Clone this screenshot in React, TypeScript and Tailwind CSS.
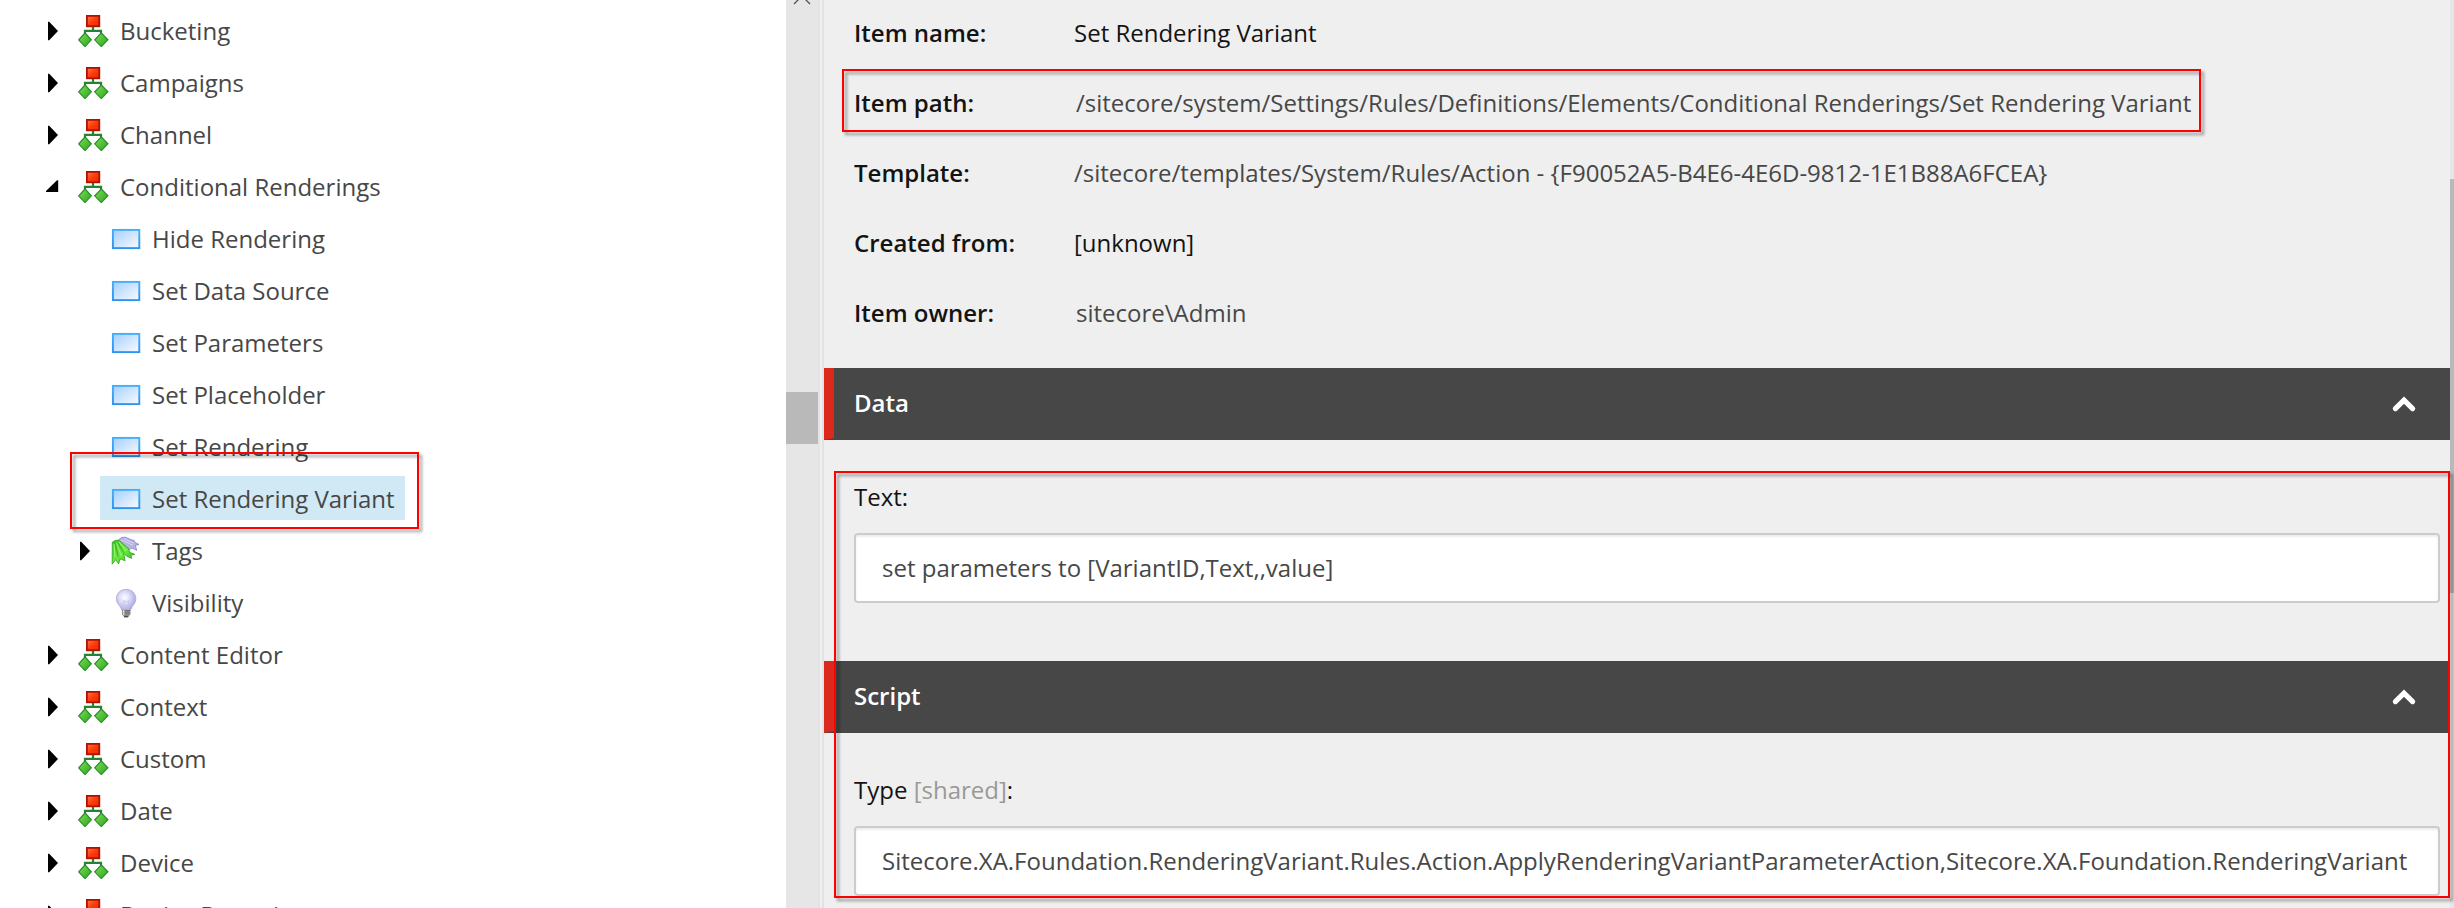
import React from "react";

type IconKind = "tree" | "panel" | "tags" | "bulb";
type Node = {
  label: string;
  icon: IconKind;
  nested?: boolean;
  state?: "closed" | "open";
  selected?: boolean;
};

const nodes: Node[] = [
  { label: "Bucketing", icon: "tree", state: "closed" },
  { label: "Campaigns", icon: "tree", state: "closed" },
  { label: "Channel", icon: "tree", state: "closed" },
  { label: "Conditional Renderings", icon: "tree", state: "open" },
  { label: "Hide Rendering", icon: "panel", nested: true },
  { label: "Set Data Source", icon: "panel", nested: true },
  { label: "Set Parameters", icon: "panel", nested: true },
  { label: "Set Placeholder", icon: "panel", nested: true },
  { label: "Set Rendering", icon: "panel", nested: true },
  { label: "Set Rendering Variant", icon: "panel", nested: true, selected: true },
  { label: "Tags", icon: "tags", nested: true, state: "closed" },
  { label: "Visibility", icon: "bulb", nested: true },
  { label: "Content Editor", icon: "tree", state: "closed" },
  { label: "Context", icon: "tree", state: "closed" },
  { label: "Custom", icon: "tree", state: "closed" },
  { label: "Date", icon: "tree", state: "closed" },
  { label: "Device", icon: "tree", state: "closed" },
  { label: "Device Detection", icon: "tree", state: "closed" },
];

function Gradients() {
  return (
    <svg width="0" height="0" className="absolute">
      <defs>
        <linearGradient id="red" x1="0" y1="0" x2="1" y2="1">
          <stop offset="0" stopColor="#ff7a4a" />
          <stop offset="0.5" stopColor="#fb3c08" />
          <stop offset="1" stopColor="#e82a00" />
        </linearGradient>
        <linearGradient id="green" x1="0" y1="0" x2="1" y2="1">
          <stop offset="0" stopColor="#7fe05a" />
          <stop offset="1" stopColor="#2ba31c" />
        </linearGradient>
        <linearGradient id="blue" x1="0" y1="0" x2="1" y2="1">
          <stop offset="0" stopColor="#a3cfff" />
          <stop offset="0.5" stopColor="#cfe5ff" />
          <stop offset="1" stopColor="#fafcff" />
        </linearGradient>
        <linearGradient id="frame" x1="0" y1="0" x2="0" y2="1">
          <stop offset="0" stopColor="#46aefb" />
          <stop offset="1" stopColor="#2f93f0" />
        </linearGradient>
        <linearGradient id="leaf" x1="0" y1="0" x2="1" y2="1">
          <stop offset="0" stopColor="#3fb92b" />
          <stop offset="0.5" stopColor="#6bea3c" />
          <stop offset="1" stopColor="#33ad25" />
        </linearGradient>
        <radialGradient id="glass" cx="0.42" cy="0.4" r="0.6">
          <stop offset="0" stopColor="#ffffff" />
          <stop offset="0.45" stopColor="#dcdcfa" />
          <stop offset="1" stopColor="#a9a9e2" />
        </radialGradient>
      </defs>
    </svg>
  );
}

function ItemIcon({ kind }: { kind: IconKind }) {
  return (
    <svg width="32" height="32" viewBox="0 0 32 32" className="shrink-0">
      {kind === "tree" && (
        <>
          <path d="M15 12v4M7 21v-5.2h16V21" fill="none" stroke="#23862f" strokeWidth="2.2" />
          <rect x="8.9" y="0.9" width="12.4" height="10.4" fill="url(#red)" stroke="#b01208" strokeWidth="1.8" />
          <path d="M7 18l6.3 6.8L7 31.6.7 24.8z" fill="url(#green)" stroke="#2a8f27" strokeWidth="1.2" />
          <path d="M23.3 18l6.6 6.8-6.6 6.8-6.6-6.8z" fill="url(#green)" stroke="#2a8f27" strokeWidth="1.2" />
        </>
      )}
      {kind === "panel" && (
        <rect x="2.9" y="6.9" width="26.4" height="18.2" fill="url(#blue)" stroke="url(#frame)" strokeWidth="1.9" />
      )}
      {kind === "tags" && (
        <>
          <path
            d="M9 4.5Q11 1.8 15 2.1L22 5l2 .2 1 2.2 4 2-3.7 1 1.5 5-4.8-2.3-2.3 1.2L8 7z"
            fill="#b5b2e2"
            stroke="#8a86c8"
            strokeWidth="0.8"
          />
          <path d="M11 4.8l12 5.4M14 3.6l10 4.6" stroke="#d9d7f5" strokeWidth="1" />
          <path
            d="M2.3 7.2Q5 4.6 9 5.2l10 8.8.3 3.2 5.5 2.2-3.9.8.8 3.2-4.8-2.2-3.2-2.8 1.4 7.4-3.6-1.6-1.6 0-1.2 4.6-2.9-4.2-3.6 4.6z"
            fill="url(#leaf)"
            stroke="#35ab27"
            strokeWidth="0.9"
          />
          <path d="M4 9l1 13M6.5 8l5 13.5M9 7l7.5 9" fill="none" stroke="#8af561" strokeWidth="1.3" />
          <path d="M5.3 8.5l3 14M8 8l6 10" fill="none" stroke="#2f9f22" strokeWidth="0.7" />
        </>
      )}
      {kind === "bulb" && (
        <>
          <path
            d="M16.2 2.4c-6 0-9.8 4.2-9.8 9.4 0 5.4 4.2 6.6 5.4 11.2h8.8c1.2-4.6 5.2-5.8 5.2-11.2 0-5.2-3.8-9.4-9.6-9.4z"
            fill="url(#glass)"
            stroke="#b4b2dc"
            strokeWidth="1"
          />
          <path d="M14.4 22l-.9-8.5 2.6 1.6 2.6-1.6-.8 8.5" fill="none" stroke="#c5c5ee" strokeWidth="0.9" />
          <path d="M12 23h8.4v4.2l-2.4 3h-3.6l-2.4-3z" fill="#8f8f8f" />
          <path d="M12 23.6h8.4M12.2 26h8" stroke="#6b6b6b" strokeWidth="0.9" />
          <path d="M13.6 23v5" stroke="#dedede" strokeWidth="1.5" />
          <path d="M14 29.6h4.2" stroke="#4d4d4d" strokeWidth="1.4" />
        </>
      )}
    </svg>
  );
}

function Toggle({ state }: { state?: "closed" | "open" }) {
  return (
    <svg width="14" height="20" viewBox="0 0 14 20" className="shrink-0">
      {state === "closed" && <path d="M2 0.8L3.2 0.8 12 10 3.2 19.2 2 19.2z" fill="#000" />}
      {state === "open" && <path d="M12.2 3.2V15H0v-1L11 3.2z" fill="#000" />}
    </svg>
  );
}

function TreeRow({ node }: { node: Node }) {
  return (
    <li className={`flex h-[52px] shrink-0 items-center ${node.nested ? "pl-[78px]" : "pl-[46px]"}`}>
      <Toggle state={node.state} />
      <div
        className={`ml-2 flex h-11 items-center pr-[10px] pl-[10px] ${
          node.selected ? "mb-[2px] bg-[#d0e9f5] pt-[2px]" : ""
        }`}
      >
        <ItemIcon kind={node.icon} />
        <span className="pb-[2px] pl-[10px] whitespace-nowrap">{node.label}</span>
      </div>
    </li>
  );
}

function InfoRow({ label, value, dark, inset }: { label: string; value: string; dark?: boolean; inset?: string }) {
  return (
    <div className="flex h-[70px] items-center">
      <div className="w-[220px] font-semibold text-[#131313]">{label}</div>
      <div className={`whitespace-nowrap ${inset ?? ""} ${dark ? "text-[#131313]" : "text-[#474747]"}`}>{value}</div>
    </div>
  );
}

function SectionHeader({ title }: { title: string }) {
  return (
    <div className="flex h-[72px] shrink-0 items-center justify-between border-b-2 border-l-10 border-b-[#474747] border-l-[#dc291e] bg-[#474747] pr-[32px] pb-px pl-5">
      <span className="font-semibold text-white">{title}</span>
      <svg width="28" height="20" viewBox="0 0 28 20">
        <path d="M5.4 15.6L14 7.2l8.6 8.4" fill="none" stroke="#fff" strokeWidth="5.2" strokeLinecap="round" />
      </svg>
    </div>
  );
}

function Field({ value }: { value: string }) {
  return (
    <div className="mr-[10px] ml-[30px] flex h-[70px] shrink-0 items-center rounded-[4px] border-2 border-[#cccccc] bg-white pb-[2px] pl-[26px] whitespace-nowrap text-[#474747] shadow-[inset_0_2px_2px_rgba(0,0,0,0.075)]">
      {value}
    </div>
  );
}

function Marker({ place }: { place: string }) {
  return (
    <div
      className={`pointer-events-none absolute border-2 border-[#ff0000] drop-shadow-[3px_3px_1.5px_rgba(0,0,0,0.4)] ${place}`}
    />
  );
}

export default function App() {
  return (
    <div className="relative flex h-[908px] w-[2454px] overflow-hidden bg-white font-['Open_Sans',sans-serif] text-[24px] leading-[33px] text-[#474747]">
      <Gradients />

      <ul className="flex w-[786px] shrink-0 flex-col overflow-hidden pt-[5px]">
        {nodes.map((n) => (
          <TreeRow key={n.label} node={n} />
        ))}
      </ul>

      <div className="flex w-[38px] shrink-0 bg-[#e6e6e6]">
        <div className="w-8">
          <svg width="32" height="392" viewBox="0 0 32 392">
            <path d="M8 4l8-8 8 8" fill="none" stroke="#505050" strokeWidth="1.3" />
          </svg>
          <div className="h-[52px] bg-[#b9b9b9]" />
        </div>
        <div className="w-[2px] bg-[#e3e3e3]" />
        <div className="w-[2px] bg-[#f0f0f0]" />
        <div className="w-[2px] bg-[#e2e2e2]" />
      </div>

      <main className="flex w-[1626px] shrink-0 flex-col overflow-hidden bg-[#efefef]">
        <div className="-mt-[3px] h-[371px] shrink-0 pl-[30px]">
          <InfoRow label="Item name:" value="Set Rendering Variant" dark />
          <InfoRow label="Item path:" value="/sitecore/system/Settings/Rules/Definitions/Elements/Conditional Renderings/Set Rendering Variant" inset="ml-[2px]" />
          <InfoRow label="Template:" value="/sitecore/templates/System/Rules/Action - {F90052A5-B4E6-4E6D-9812-1E1B88A6FCEA}" />
          <InfoRow label="Created from:" value="[unknown]" dark />
          <InfoRow label="Item owner:" value="sitecore\Admin" inset="ml-[2px]" />
        </div>

        <SectionHeader title="Data" />
        <div className="flex h-[93px] shrink-0 items-end pb-[20px] pl-[30px] text-[#131313]">Text:</div>
        <Field value="set parameters to [VariantID,Text,,value]" />
        <div className="h-[58px] shrink-0" />

        <SectionHeader title="Script" />
        <div className="flex h-[93px] shrink-0 items-end pb-[20px] pl-[30px] whitespace-pre text-[#131313]">
          Type <span className="text-[#999999]">[shared]</span>:
        </div>
        <Field value="Sitecore.XA.Foundation.RenderingVariant.Rules.Action.ApplyRenderingVariantParameterAction,Sitecore.XA.Foundation.RenderingVariant" />
      </main>

      <div className="w-1 shrink-0 bg-[#e6e6e6] pt-[179px]">
        <div className="h-[414px] bg-[#b9b9b9]" />
      </div>

      <Marker place="left-[70px] top-[452px] h-[77px] w-[349px]" />
      <Marker place="left-[842px] top-[69px] h-[63px] w-[1359px]" />
      <Marker place="left-[834px] top-[471px] h-[427px] w-[1616px]" />
    </div>
  );
}
